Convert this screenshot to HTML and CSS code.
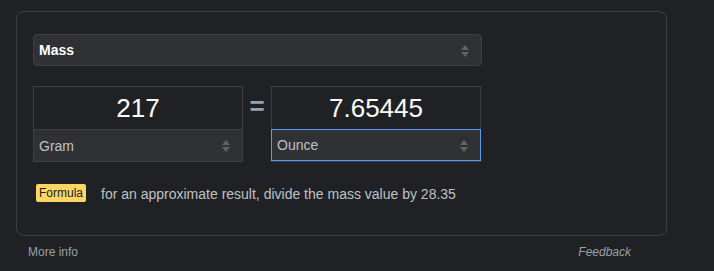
FILE: index.html
```html
<!DOCTYPE html>
<html>
<head>
    <title>Unit converter</title>
    <link rel="stylesheet" href="styles.css">
</head>
<body>
    <!-- Converter card -->
    <div class="card">
        <!-- Quantity selection -->
        <div class="select-wrap quantity">
            <select class="select bold">
                <option>Mass</option>
            </select>
            <svg class="arrows" width="8" height="12" viewBox="0 0 8 12"><path d="M4 0 L8 5 L0 5 Z M0 7 L8 7 L4 12 Z"/></svg>
        </div>

        <!-- From / to fields -->
        <div class="row">
            <div class="unit">
                <input class="value" type="text" value="217">
                <div class="select-wrap">
                    <select class="select">
                        <option>Gram</option>
                    </select>
                    <svg class="arrows" width="8" height="12" viewBox="0 0 8 12"><path d="M4 0 L8 5 L0 5 Z M0 7 L8 7 L4 12 Z"/></svg>
                </div>
            </div>
            <div class="equals">=</div>
            <div class="unit">
                <input class="value" type="text" value="7.65445">
                <div class="select-wrap focused">
                    <select class="select">
                        <option>Ounce</option>
                    </select>
                    <svg class="arrows" width="8" height="12" viewBox="0 0 8 12"><path d="M4 0 L8 5 L0 5 Z M0 7 L8 7 L4 12 Z"/></svg>
                </div>
            </div>
        </div>

        <!-- Formula hint -->
        <div class="formula">
            <span class="badge">Formula</span>
            <span class="hint">for an approximate result, divide the mass value by 28.35</span>
        </div>
    </div>

    <!-- Footer links -->
    <div class="footer">
        <a href="#">More info</a>
        <a href="#" class="feedback">Feedback</a>
    </div>
</body>
</html>
```

FILE: styles.css
```css
/* Dark converter widget */
body {
    margin: 0;
    background-color: #202124;
    font-family: Arial, "Liberation Sans", sans-serif;
    font-size: 14px;
    color: #bdc1c6;
}

.card {
    margin: 11px 0 0 16px;
    width: 617px;
    height: 201px;
    padding: 22px 16px 0 16px;
    border: 1px solid #3c4043;
    border-radius: 8px;
}

.select-wrap {
    position: relative;
    height: 31px;
    background-color: #303134;
    border-top: 1px solid #3c4043;
}

.select-wrap.quantity {
    width: 447px;
    height: 30px;
    border: 1px solid #3c4043;
    border-radius: 4px;
}

.select-wrap.focused {
    height: 30px;
    margin: 0 -1px -1px -1px;
    border: 1px solid #5a9bf0;
}

.select {
    appearance: none;
    -webkit-appearance: none;
    width: 100%;
    height: 100%;
    margin: 0;
    padding: 0 5px;
    border: 0;
    background: transparent;
    font-family: Arial, "Liberation Sans", sans-serif;
    font-size: 14px;
    color: #bdc1c6;
    outline: none;
}

.select.bold {
    color: #ffffff;
    font-weight: bold;
}

.arrows {
    position: absolute;
    right: 12px;
    top: 10px;
    fill: #5f6368;
    pointer-events: none;
}

.row {
    display: flex;
    margin-top: 20px;
}

.unit {
    width: 208px;
    border: 1px solid #3c4043;
}

.value {
    display: block;
    width: 100%;
    height: 42px;
    margin: 0;
    padding: 0;
    box-sizing: border-box;
    border: 0;
    background: transparent;
    text-align: center;
    font-family: Arial, "Liberation Sans", sans-serif;
    font-size: 26px;
    color: #ffffff;
    outline: none;
}

.equals {
    width: 28px;
    text-align: center;
    font-size: 26px;
    line-height: 40px;
    font-weight: bold;
    color: #9aa0a6;
}

.formula {
    display: flex;
    align-items: center;
    margin-top: 22px;
    margin-left: 3px;
}

.badge {
    padding: 1px 3px;
    background-color: #fdd663;
    border-radius: 2px;
    font-size: 12px;
    line-height: 16px;
    color: #202124;
}

.hint {
    margin-left: 15px;
    margin-top: 2px;
}

.footer {
    display: flex;
    justify-content: space-between;
    width: 603px;
    margin: 9px 0 0 28px;
    font-size: 12px;
}

.footer a {
    color: #9aa0a6;
    text-decoration: none;
}

.feedback {
    font-style: italic;
}
```
